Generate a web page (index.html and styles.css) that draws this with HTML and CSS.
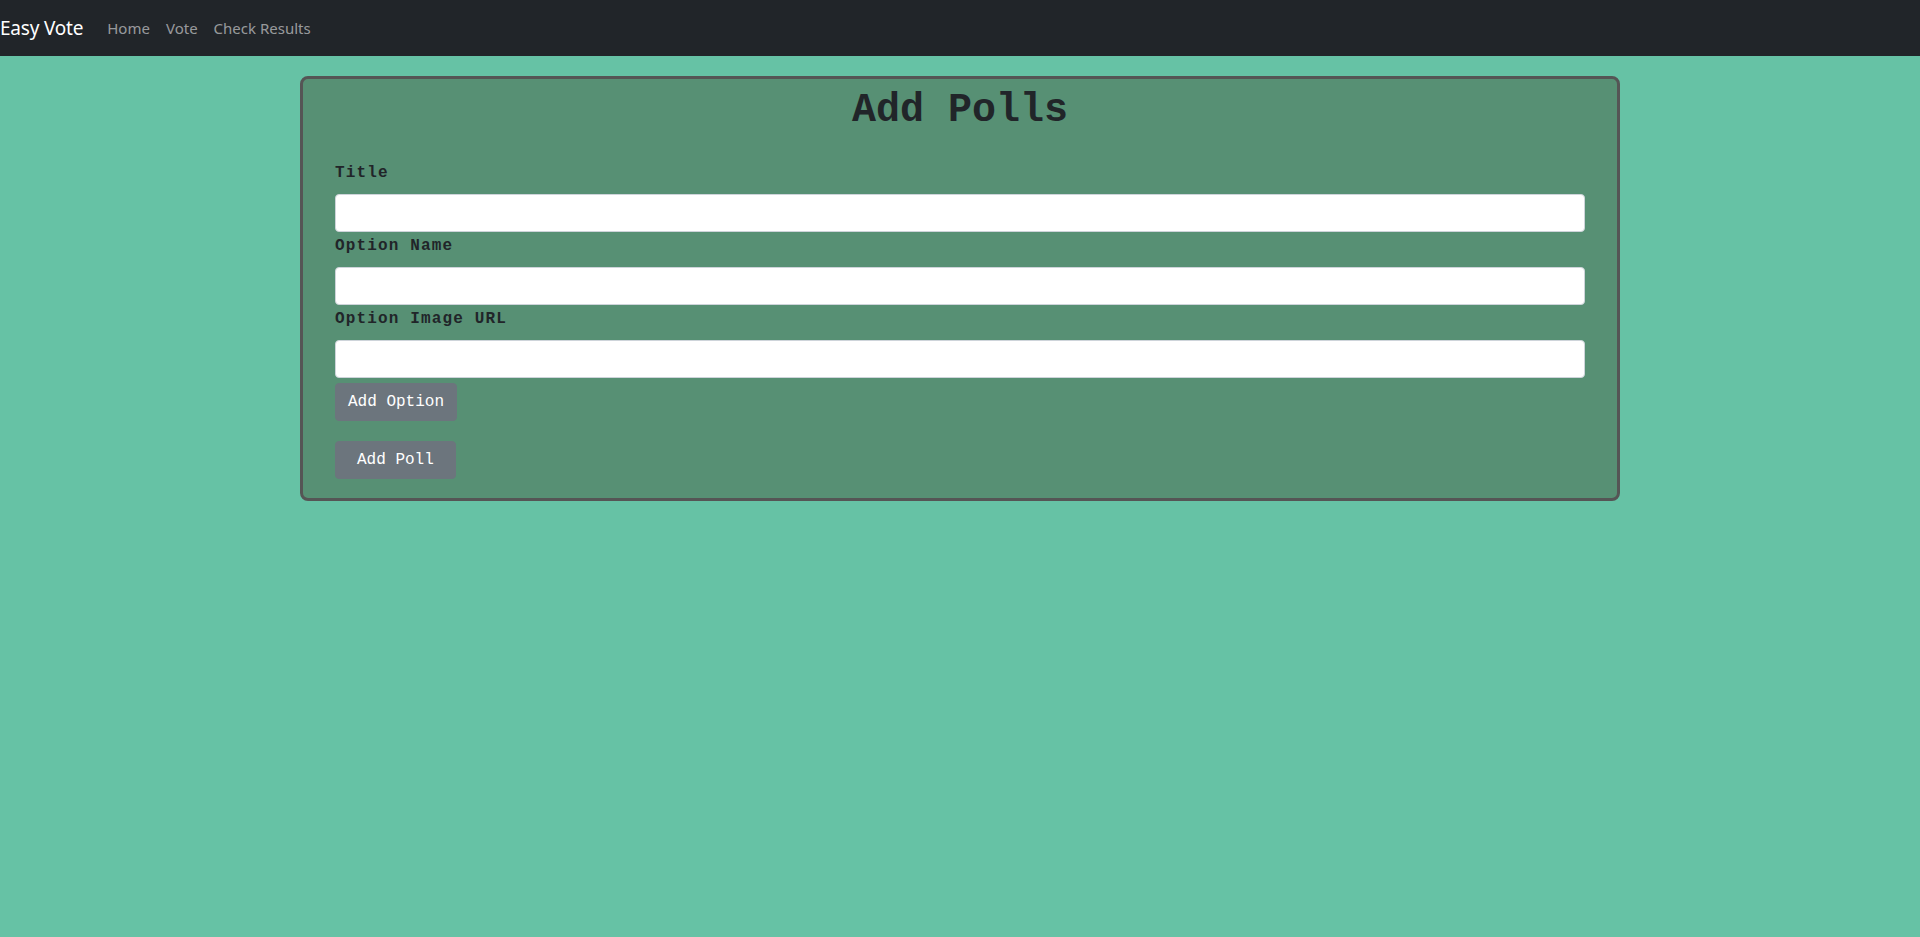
FILE: index.html
```html
<!DOCTYPE html>
<html lang="en">
<head>
<meta charset="utf-8">
<title>Easy Vote</title>
<link rel="stylesheet" href="styles.css">
</head>
<body>
<nav class="navbar">
  <a class="brand" href="#">Easy Vote</a>
  <ul class="nav-links">
    <li><a href="#">Home</a></li>
    <li><a href="#">Vote</a></li>
    <li><a href="#">Check Results</a></li>
  </ul>
</nav>
<main class="card">
  <h1 class="card-title">Add Polls</h1>
  <form class="poll-form">
    <label class="field-label" for="title">Title</label>
    <input class="field-input" id="title" type="text">
    <label class="field-label" for="opt-name">Option Name</label>
    <input class="field-input" id="opt-name" type="text">
    <label class="field-label" for="opt-url">Option Image URL</label>
    <input class="field-input" id="opt-url" type="text">
    <button type="button" class="btn btn-option">Add Option</button>
    <button type="button" class="btn btn-poll">Add Poll</button>
  </form>
</main>
</body>
</html>
```

FILE: styles.css
```css
* { box-sizing: border-box; }

html, body {
  margin: 0;
  padding: 0;
}

body {
  background: #66c2a5;
  font-family: "Open Sans", "Liberation Sans", sans-serif;
  color: #212529;
  min-height: 937px;
}

.navbar {
  background: #212529;
  height: 56px;
  padding: 8px 0;
  display: flex;
  align-items: center;
}

.brand {
  font-family: "Noto Sans", "Liberation Sans", sans-serif;
  font-size: 19px;
  line-height: 30px;
  padding: 5px 0;
  margin-right: 16px;
  color: #fff;
  text-decoration: none;
  letter-spacing: -0.2px;
}

.nav-links {
  list-style: none;
  margin: 0;
  padding: 0;
  display: flex;
}

.nav-links a {
  display: block;
  padding: 8px 8px;
  font-family: "Noto Sans", "Liberation Sans", sans-serif;
  font-size: 15px;
  line-height: 24px;
  color: rgba(255, 255, 255, 0.55);
  text-decoration: none;
}

.card {
  width: 1320px;
  margin: 20px auto 0;
  background: #579074;
  border: 3px solid #555555;
  border-radius: 8px;
  padding: 8px 32px 19px;
}

.card-title {
  font-family: "Liberation Mono", "Courier New", monospace;
  font-weight: bold;
  font-size: 40px;
  line-height: 48px;
  text-align: center;
  margin: 0 0 24px;
  color: #212529;
}

.poll-form {
  display: flex;
  flex-direction: column;
  align-items: flex-start;
}

.field-label {
  display: block;
  font-family: "Liberation Mono", "Courier New", monospace;
  font-weight: bold;
  font-size: 16px;
  line-height: 24px;
  letter-spacing: 1.15px;
  padding-top: 2px;
  margin-bottom: 9px;
  color: #212529;
}

.field-input {
  width: 100%;
  height: 38px;
  background: #fff;
  border: 1px solid #ced4da;
  border-radius: 4px;
  padding: 6px 12px;
  font-size: 16px;
}

.btn {
  font-family: "Liberation Mono", "Courier New", monospace;
  font-size: 16px;
  line-height: 24px;
  color: #fff;
  background: #6c757d;
  border: 1px solid #6c757d;
  border-radius: 4px;
  height: 38px;
  cursor: pointer;
}

.btn-option {
  margin-top: 5px;
  padding: 6px 12px;
}

.btn-poll {
  margin-top: 20px;
  padding: 6px 21px;
}
```
